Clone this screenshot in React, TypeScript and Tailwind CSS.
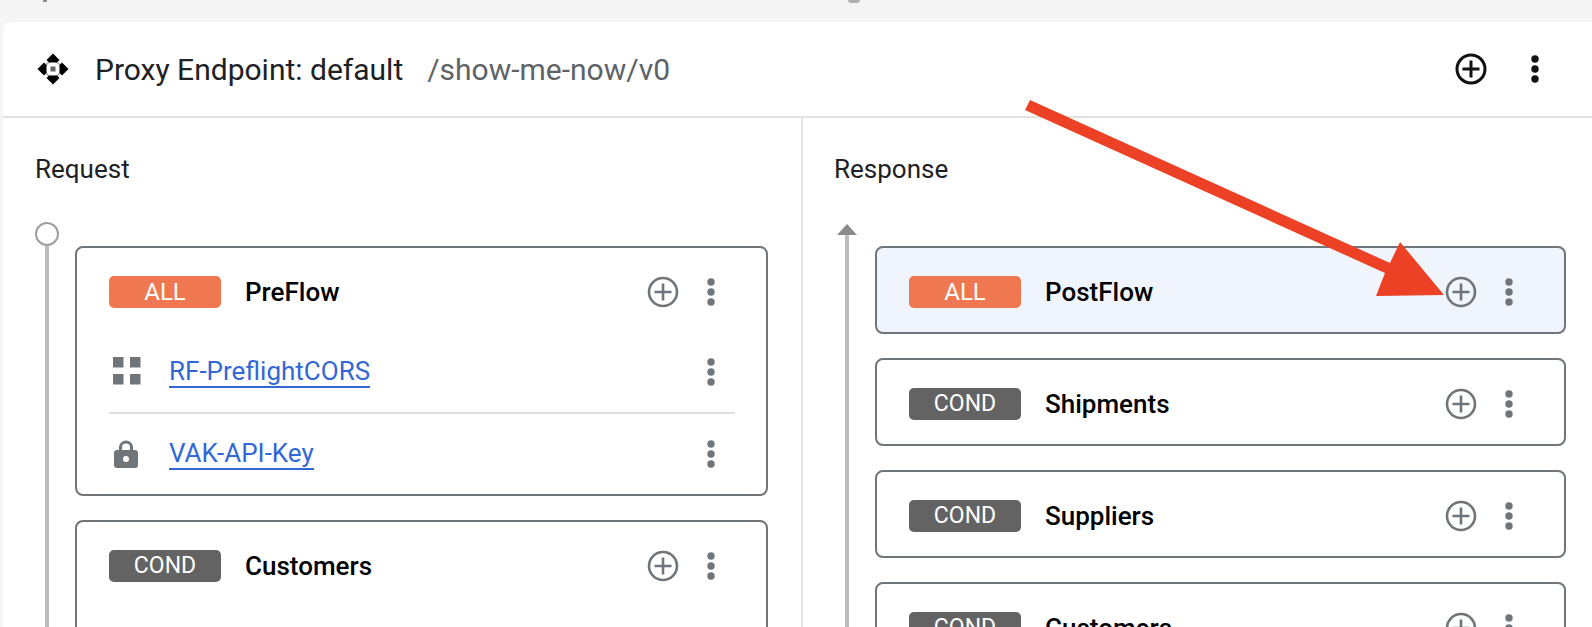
import React from "react";

const Plus = ({ dark = false }: { dark?: boolean }) => (
  <svg width="32" height="32" viewBox="0 0 32 32" fill="none" stroke={dark ? "#111" : "#70757a"} strokeWidth={dark ? 3 : 2.6}>
    <circle cx="16" cy="16" r="14" />
    <path d="M16 7.5v17M7.5 16h17" />
  </svg>
);

const Dots = ({ dark = false }: { dark?: boolean }) => (
  <svg width="10" height="30" viewBox="0 0 10 30" fill={dark ? "#111" : "#70757a"}>
    <circle cx="5" cy="5" r="3.7" />
    <circle cx="5" cy="15" r="3.7" />
    <circle cx="5" cy="25" r="3.7" />
  </svg>
);

const Badge = ({ kind }: { kind: "ALL" | "COND" }) => (
  <span
    className={`flex h-8 w-[112px] shrink-0 items-center justify-center rounded-[5px] text-white ${
      kind === "ALL" ? "bg-[#ef7850] text-[24px]" : "bg-[#636363] text-[23px]"
    }`}
  >
    {kind}
  </span>
);

const FlowHead = ({ kind, name }: { kind: "ALL" | "COND"; name: string }) => (
  <div className="mr-[19px] flex h-[32px] items-center">
    <Badge kind={kind} />
    <span className="ml-6 text-[26px] font-medium text-black">{name}</span>
    <span className="ml-auto flex items-center gap-[27px]">
      <Plus />
      <Dots />
    </span>
  </div>
);

const FlowCard = ({
  kind,
  name,
  active = false,
  children,
}: {
  kind: "ALL" | "COND";
  name: string;
  active?: boolean;
  children?: React.ReactNode;
}) => (
  <div
    className={`shrink-0 rounded-lg border-2 border-[#70757a] pt-[28px] pb-[24px] pl-[32px] pr-[31px] ${
      active ? "bg-[#eff4fd]" : "bg-white"
    }`}
  >
    <FlowHead kind={kind} name={name} />
    {children}
  </div>
);

const PolicyLink = ({ icon, name }: { icon: React.ReactNode; name: string }) => (
  <div className="flex h-[80px] items-center pr-[19px]">
    <span className="flex w-[34px] shrink-0 justify-center">{icon}</span>
    <a className="ml-[26px] border-b-2 border-[#3367d6] text-[26px] leading-[30px] text-[#3367d6]">{name}</a>
    <span className="ml-auto">
      <Dots />
    </span>
  </div>
);

const GridIcon = () => (
  <svg width="30" height="30" viewBox="0 0 30 30" fill="#70757a" className="-mt-[2px]">
    <rect x="2" y="1" width="10.5" height="10.5" />
    <rect x="19" y="1" width="10.5" height="10.5" />
    <rect x="2" y="18" width="10.5" height="10.5" />
    <rect x="19" y="18" width="10.5" height="10.5" />
  </svg>
);

const LockIcon = () => (
  <svg width="26" height="28" viewBox="0 0 26 28">
    <path d="M7.5 11V7.5a5.5 5.5 0 0 1 11 0V11" fill="none" stroke="#70757a" strokeWidth="3" />
    <rect x="1" y="10" width="24" height="18" rx="3" fill="#70757a" />
    <circle cx="13" cy="19" r="3" fill="#fff" />
  </svg>
);

const MoveIcon = () => (
  <svg width="32" height="32" viewBox="0 0 32 32" fill="#000">
    <circle cx="16" cy="16" r="8" fill="none" stroke="#b5b5b5" strokeWidth="1.6" />
    <path d="M16 0.5 22.5 7 20 9.5H12L9.5 7Z" />
    <path d="M16 31.5 22.5 25 20 22.5H12L9.5 25Z" />
    <path d="M0.5 16 7 9.5 9.5 12V20L7 22.5Z" />
    <path d="M31.5 16 25 9.5 22.5 12V20L25 22.5Z" />
    <rect x="13.5" y="13.5" width="5" height="5" fill="#666" />
  </svg>
);

export default function App() {
  return (
    <div className="relative h-[627px] w-[1592px] overflow-hidden bg-[#f5f5f5] pl-[3px] pt-[22px] font-['Roboto',sans-serif]">
      <span className="absolute left-[43px] top-0 h-[2px] w-[4px] bg-[#8a8a8a]" />
      <span className="absolute left-[848px] top-0 h-[3px] w-[12px] rounded-b-full bg-[#b0b0b0]" />
      <div className="h-full rounded-tl-lg bg-white">
        <header className="flex h-[96px] items-center border-b-2 border-[#e2e2e2] pl-[34px] pr-[52px]">
          <MoveIcon />
          <span className="ml-[26px] text-[30px] text-[#202124]">Proxy Endpoint: default</span>
          <span className="ml-[24px] text-[30px] text-[#5f6368]">/show-me-now/v0</span>
          <span className="ml-auto flex items-center gap-[43px]">
            <Plus dark />
            <Dots dark />
          </span>
        </header>

        <div className="flex h-[600px]">
          <section className="w-[800px] shrink-0 border-r-2 border-[#e2e2e2] pl-[32px] pr-[33px]">
            <h2 className="flex h-[104px] items-center pb-[2px] text-[26px] font-normal leading-none text-[#202124]">Request</h2>
            <div className="flex">
              <div className="flex w-[24px] shrink-0 flex-col items-center">
                <span className="h-6 w-6 shrink-0 rounded-full border-2 border-[#9e9e9e]" />
                <span className="h-[500px] w-1 bg-[#bdbdbd]" />
              </div>
              <div className="ml-[16px] flex min-w-0 flex-1 flex-col gap-[24px] pt-[24px]">
                <FlowCard kind="ALL" name="PreFlow">
                  <div className="mt-[24px] -mb-[24px]">
                    <PolicyLink icon={<GridIcon />} name="RF-PreflightCORS" />
                    <div className="h-0.5 bg-[#e0e0e0]" />
                    <PolicyLink icon={<LockIcon />} name="VAK-API-Key" />
                  </div>
                </FlowCard>
                <FlowCard kind="COND" name="Customers">
                  <div className="h-[100px]" />
                </FlowCard>
              </div>
            </div>
          </section>

          <section className="min-w-0 flex-1 pl-[32px]">
            <h2 className="-ml-px flex h-[104px] items-center pb-[2px] text-[26px] font-normal leading-none text-[#202124]">Response</h2>
            <div className="flex">
              <div className="flex w-[24px] shrink-0 flex-col items-center pt-[2px]">
                <svg width="20" height="11" viewBox="0 0 20 11" fill="#8a8a8a" className="shrink-0">
                  <path d="M10 0 20 11H0Z" />
                </svg>
                <span className="h-[500px] w-1 bg-[#bdbdbd]" />
              </div>
              <div className="ml-[16px] mr-[26px] flex min-w-0 flex-1 flex-col gap-[24px] pt-[24px]">
                <FlowCard kind="ALL" name="PostFlow" active />
                <FlowCard kind="COND" name="Shipments" />
                <FlowCard kind="COND" name="Suppliers" />
                <FlowCard kind="COND" name="Customers" />
              </div>
            </div>
          </section>
        </div>
      </div>

      <svg className="pointer-events-none absolute left-0 top-0" width="1592" height="627" viewBox="0 0 1592 627">
        <path fill="#ec4124" d="M1030 100 1390 263 1400 242 1444 295 1376 296 1385 273 1025 110Z" />
      </svg>
    </div>
  );
}
